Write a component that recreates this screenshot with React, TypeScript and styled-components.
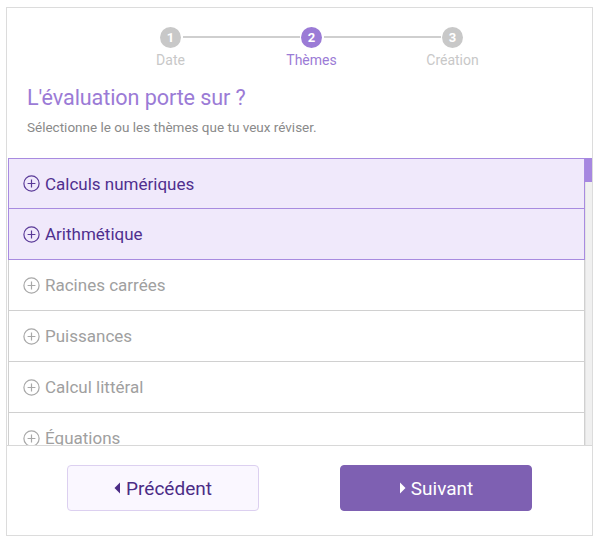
import React from "react";
import styled, { createGlobalStyle, css } from "styled-components";

const Global = createGlobalStyle`
  html, body { margin: 0; padding: 0; background: #fff; }
  body { font-family: Roboto, "Liberation Sans", sans-serif; }
  * { box-sizing: border-box; }
`;

const Frame = styled.div`
  margin: 7px 0 0 6px;
  width: 587px;
  height: 529px;
  border: 1px solid #dcdcdc;
  display: flex;
  flex-direction: column;
  background: #fff;
`;

const Header = styled.div`
  height: 150px;
  display: flex;
  flex-direction: column;
  padding-top: 19px;
`;

const Stepper = styled.div`
  display: grid;
  grid-template-columns: repeat(3, 141px);
  justify-content: center;
  padding-left: 24px;
`;

const Step = styled.div<{ $last?: boolean }>`
  position: relative;
  display: flex;
  flex-direction: column;
  align-items: center;
  ${(p) =>
    !p.$last &&
    css`
      &::after {
        content: "";
        position: absolute;
        top: 9px;
        left: calc(50% + 12px);
        width: calc(100% - 24px);
        height: 2px;
        background: #cfcfcf;
      }
    `}
`;

const Dot = styled.div<{ $active?: boolean }>`
  width: 21px;
  height: 21px;
  border-radius: 50%;
  background: ${(p) => (p.$active ? "#9b7bd6" : "#c8c8c8")};
  color: #fff;
  font-size: 13px;
  font-weight: 700;
  display: flex;
  align-items: center;
  justify-content: center;
`;

const StepLabel = styled.div<{ $active?: boolean }>`
  margin-top: 4px;
  font-size: 14px;
  color: ${(p) => (p.$active ? "#9b7bd6" : "#c8c8c8")};
`;

const Title = styled.h1`
  margin: 16px 0 0 20px;
  font-size: 21.6px;
  font-weight: 400;
  color: #9b7bd6;
  line-height: 28px;
  letter-spacing: -0.1px;
`;

const Subtitle = styled.p`
  margin: 6px 0 0 20px;
  font-size: 13.5px;
  color: #8a8a8a;
  line-height: 18px;
`;

const ListArea = styled.div`
  flex: 1;
  min-height: 0;
  display: flex;
`;

const Items = styled.div`
  flex: 1;
  overflow: hidden;
  padding-left: 1px;
`;

const ScrollTrack = styled.div`
  width: 7px;
  background: #f0f0f0;
  border-left: 1px solid #e4e4e4;
  display: flex;
  flex-direction: column;
`;

const ScrollThumb = styled.div`
  height: 24px;
  background: #a687e0;
  margin-left: -1px;
`;

const Item = styled.div<{ $selected?: boolean }>`
  height: 52px;
  display: flex;
  align-items: center;
  gap: 5px;
  padding-left: 14px;
  font-size: 17px;
  border: 1px solid ${(p) => (p.$selected ? "#a88be0" : "#d0d0d0")};
  margin-top: -1px;
  &:first-child { margin-top: 0; height: 51px; }
  background: ${(p) => (p.$selected ? "#f0e9fb" : "#fff")};
  color: ${(p) => (p.$selected ? "#4f2f8f" : "#a0a0a0")};
  position: relative;
  ${(p) => p.$selected && css`z-index: 1;`}
`;

const Footer = styled.div`
  border-top: 1px solid #d8d8d8;
  height: 90px;
  display: flex;
  justify-content: space-between;
  align-items: flex-start;
  padding: 19px 60px 0;
`;

const Button = styled.button<{ $primary?: boolean }>`
  width: 192px;
  height: 46px;
  border-radius: 4px;
  font-family: Roboto, "Liberation Sans", sans-serif;
  font-size: 19px;
  font-weight: 400;
  display: flex;
  align-items: center;
  justify-content: center;
  gap: 5px;
  cursor: pointer;
  border: 1px solid ${(p) => (p.$primary ? "#7e60b2" : "#dcd0f0")};
  background: ${(p) => (p.$primary ? "#7e60b2" : "#faf7ff")};
  color: ${(p) => (p.$primary ? "#ffffff" : "#4b2c86")};
`;

const PlusIcon = ({ color }: { color: string }) => (
  <svg width="17" height="17" viewBox="0 0 17 17" fill="none">
    <circle cx="8.5" cy="8.5" r="7.6" stroke={color} strokeWidth="1.2" />
    <path d="M8.5 4.6v7.8M4.6 8.5h7.8" stroke={color} strokeWidth="1.2" />
  </svg>
);

const Caret = ({ dir }: { dir: "left" | "right" }) => (
  <svg width="7" height="12" viewBox="0 0 7 12">
    {dir === "left" ? (
      <path d="M6 0.5v11L0.5 6z" fill="currentColor" />
    ) : (
      <path d="M1 0.5v11L6.5 6z" fill="currentColor" />
    )}
  </svg>
);

const themes: { name: string; selected?: boolean }[] = [
  { name: "Calculs numériques", selected: true },
  { name: "Arithmétique", selected: true },
  { name: "Racines carrées" },
  { name: "Puissances" },
  { name: "Calcul littéral" },
  { name: "Équations" },
  { name: "Inéquations" },
  { name: "Fonctions" },
];

const steps = [
  { n: 1, label: "Date" },
  { n: 2, label: "Thèmes", active: true },
  { n: 3, label: "Création" },
];

export default function App() {
  return (
    <>
      <Global />
      <Frame>
        <Header>
          <Stepper>
            {steps.map((s, i) => (
              <Step key={s.n} $last={i === steps.length - 1}>
                <Dot $active={s.active}>{s.n}</Dot>
                <StepLabel $active={s.active}>{s.label}</StepLabel>
              </Step>
            ))}
          </Stepper>
          <Title>L'évaluation porte sur ?</Title>
          <Subtitle>Sélectionne le ou les thèmes que tu veux réviser.</Subtitle>
        </Header>
        <ListArea>
          <Items>
            {themes.map((t) => (
              <Item key={t.name} $selected={t.selected}>
                <PlusIcon color={t.selected ? "#5a3a98" : "#a8a8a8"} />
                {t.name}
              </Item>
            ))}
          </Items>
          <ScrollTrack>
            <ScrollThumb />
          </ScrollTrack>
        </ListArea>
        <Footer>
          <Button>
            <Caret dir="left" />
            Précédent
          </Button>
          <Button $primary>
            <Caret dir="right" />
            Suivant
          </Button>
        </Footer>
      </Frame>
    </>
  );
}
